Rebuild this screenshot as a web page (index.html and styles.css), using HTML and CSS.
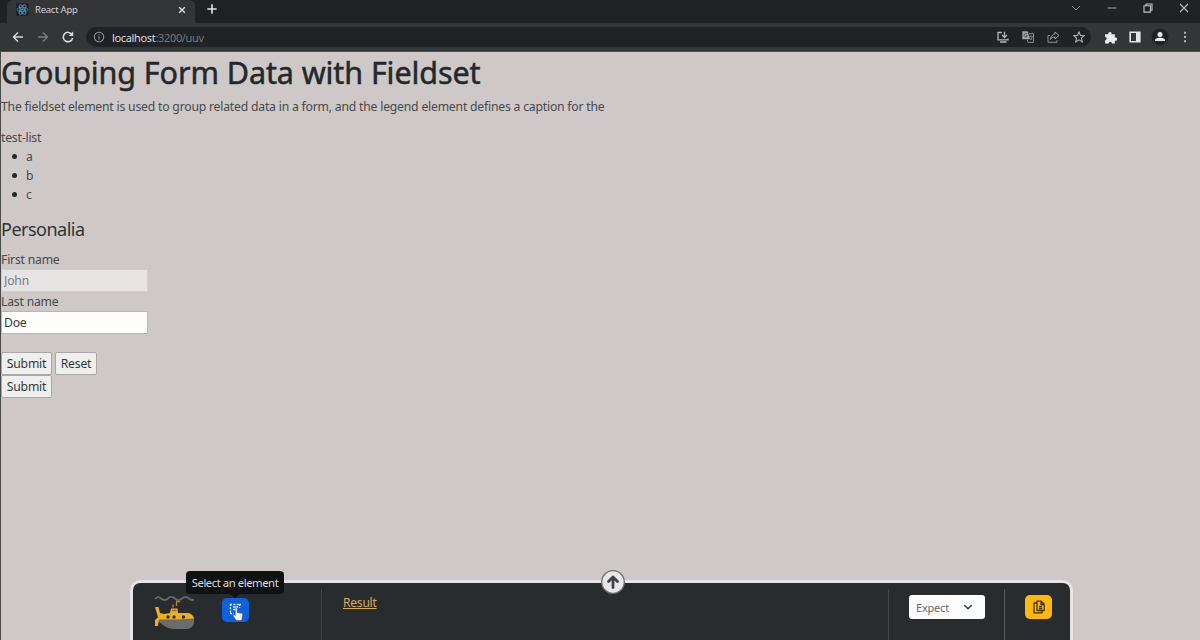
FILE: index.html
```html
<!DOCTYPE html>
<html lang="en">
<head>
<meta charset="utf-8">
<title>React App</title>
<link rel="stylesheet" href="styles.css">
</head>
<body>
<div class="window">
  <header class="tabbar">
    <div class="tab-edge"></div>
    <div class="tab">
      <svg class="favicon" width="13" height="13" viewBox="0 0 13 13"><rect width="13" height="13" rx="2" fill="#202327"/><g fill="none" stroke="#438bb7" stroke-width=".9"><ellipse cx="6.5" cy="6.5" rx="5.4" ry="2.1"/><ellipse cx="6.5" cy="6.5" rx="5.4" ry="2.1" transform="rotate(60 6.5 6.5)"/><ellipse cx="6.5" cy="6.5" rx="5.4" ry="2.1" transform="rotate(120 6.5 6.5)"/></g><circle cx="6.5" cy="6.5" r="1.2" fill="#438bb7"/></svg>
      <span class="tab-title">React App</span>
      <svg class="tab-close" width="8" height="8" viewBox="0 0 8 8"><path d="M1.2 1.2l5.6 5.6M6.8 1.2L1.2 6.8" stroke="#dedfe0" stroke-width="1.4"/></svg>
    </div>
    <svg class="new-tab" width="10" height="10" viewBox="0 0 10 10"><path d="M5 .3v9.4M.3 5h9.4" stroke="#e4e5e6" stroke-width="1.6"/></svg>
    <div class="window-controls">
      <svg width="10" height="10" viewBox="0 0 10 10"><path d="M1 3l4 4 4-4" fill="none" stroke="#8f9092"/></svg>
      <svg width="10" height="10" viewBox="0 0 10 10"><path d="M.7 5h8.6" stroke="#aaabac"/></svg>
      <svg width="10" height="10" viewBox="0 0 10 10"><path d="M1 2.7h6.4v6.4H1zM3 2.5V1h6v6.2H7.6" fill="none" stroke="#c2c3c4" stroke-width="1.1"/></svg>
      <svg width="10" height="10" viewBox="0 0 10 10"><path d="M1 1l8 8M9 1L1 9" stroke="#b9babb" stroke-width="1.1"/></svg>
    </div>
  </header>
  <nav class="toolbar">
    <svg class="nav-icon" width="12" height="12" viewBox="0 0 12 12"><path d="M6 1.5L1.5 6 6 10.5M1.5 6H11" fill="none" stroke="#d8d9da" stroke-width="1.4"/></svg>
    <svg class="nav-icon" width="12" height="12" viewBox="0 0 12 12"><path d="M6 1.5L10.5 6 6 10.5M10.5 6H1" fill="none" stroke="#7d7e80" stroke-width="1.3"/></svg>
    <svg class="nav-icon" width="12" height="12" viewBox="0 0 12 12"><path d="M10 3.6A4.7 4.7 0 1 0 10.6 7" fill="none" stroke="#dcdddd" stroke-width="1.5"/><path d="M11.2.6v4.5H6.7z" fill="#dcdddd"/></svg>
    <div class="address">
      <svg class="info" width="12" height="12" viewBox="0 0 12 12"><circle cx="6" cy="6" r="4.7" fill="none" stroke="#8e9092" stroke-width="1.1"/><path d="M6 5.3v3.2M6 3.2v1.2" stroke="#8e9092" stroke-width="1.1"/></svg>
      <span class="url"><b>localhost</b>:3200/uuv</span>
      <div class="address-icons">
        <svg width="12" height="12" viewBox="0 0 12 12"><path d="M5 1.500H1v7.300h10V7.500M3 11h6.500M7.500.8v5.500M5 4l2.500 2.500L10 4" fill="none" stroke="#b5b6b8" stroke-width="1.300"/></svg>
        <svg width="12" height="12" viewBox="0 0 12 12"><path d="M.3.3h5.4l2.2 8H.3z" fill="#a5a6a8"/><path d="M7 2.700h4.500v8.700H6l-.7-2.500" fill="none" stroke="#8a8b8d"/><path d="M7 5.400h3.800M9 4.400v1M10.200 5.500c-.6 2-1.300 2.600-2.200 3.600M7.900 6.700l2.200 2.200" stroke="#8a8b8d" fill="none" stroke-width=".8"/><path d="M5 3.200a1.700 1.700 0 1 0 .3 1.500H3.800" fill="none" stroke="#292b2e" stroke-width=".7"/></svg>
        <svg width="13" height="12" viewBox="0 0 13 12"><path d="M3 4.500H1v6.800h9V9" fill="none" stroke="#8b8d8f"/><path d="M8 1l4 3.500-4 3.500V6C5.700 6 4.400 6.800 3.500 8.500 3.800 5.500 5.300 3.500 8 3z" fill="none" stroke="#9c9ea0"/></svg>
        <svg width="12" height="12" viewBox="0 0 12 12"><path d="M6 .9l1.500 3.500 3.800.3-2.900 2.500.9 3.700L6 8.900l-3.300 2 .9-3.700L.7 4.700l3.800-.3z" fill="none" stroke="#b0b1b3" stroke-width="1.100"/></svg>
      </div>
    </div>
    <div class="browser-actions">
      <svg width="13" height="13" viewBox="0 0 12 12"><path d="M1 3h3a1.600 1.600 0 1 1 3 0h3v3a1.600 1.600 0 1 1 0 3v2.500H7.300a1.500 1.500 0 0 0-3 0H1V8.500a1.500 1.500 0 0 0 0-3z" fill="#ededed"/></svg>
      <svg width="12" height="12" viewBox="0 0 12 12"><path d="M1.200 1.200h9.600v9.600H1.200z" fill="none" stroke="#e5e5e5" stroke-width="1.600"/><path d="M7 1h4v10H7z" fill="#e5e5e5"/></svg>
      <svg width="18" height="18" viewBox="0 0 18 18"><circle cx="9" cy="9" r="8.500" fill="#202225"/><circle cx="9" cy="6.500" r="2.500" fill="#ededed"/><path d="M4 13v-.8C4 10.300 7.300 9.800 9 9.800s5 .5 5 2.400v.8z" fill="#ededed"/></svg>
      <svg width="4" height="12" viewBox="0 0 4 12"><path d="M1 .7h2v2H1zM1 5h2v2H1zM1 9.300h2v2H1z" fill="#b5b6b7"/></svg>
    </div>
  </nav>
  <main class="page">
    <h1>Grouping Form Data with Fieldset</h1>
    <p class="intro">The fieldset element is used to group related data in a form, and the legend element defines a caption for the</p>
    <div class="list-title">test-list</div>
    <ul class="list"><li>a</li><li>b</li><li>c</li></ul>
    <form class="form">
      <h2>Personalia</h2>
      <label for="first">First name</label>
      <input id="first" class="field" type="text" value="John" disabled>
      <label for="last">Last name</label>
      <input id="last" class="field" type="text" value="Doe">
      <div class="buttons"><button type="button">Submit</button><button class="reset" type="button">Reset</button></div>
      <button type="button">Submit</button>
    </form>
    <section class="assistant">
      <button class="expand" type="button" aria-label="Expand"><svg width="24" height="24" viewBox="0 0 24 24"><circle cx="12" cy="12" r="11.300" fill="#e9e7e7" stroke="#707172" stroke-width="1.300"/><path d="M12 17.500V7.500M7.500 11.500L12 7l4.500 4.500" fill="none" stroke="#3f4346" stroke-width="2.800" stroke-linecap="round" stroke-linejoin="round"/></svg></button>
      <div class="tools">
        <svg class="logo" width="42" height="36" viewBox="0 0 42 36"><path d="M1 4C3 1.500 5 1.500 7 3.500s5 2 7 0 5-2 7 0 5 2 7 0 5-2 7 0 4 1.500 5 1" fill="none" stroke="#66696a" stroke-width="1.800"/><path d="M4 22h36v5c0 4.500-4 7-8 7H20C12 34 7 28 3 25z" fill="#6b6c69"/><path d="M1 12h3.500l1.500 6 4 1 6-1 1-4.500h6.500L24 18h9c4 0 6.500 2.500 7 5.500L24 24.500 5 24.500 4 31H1v-6l3-2.500z" fill="#edae22"/><path d="M22.500 11V6.500H26M19 12.500V9.500" fill="none" stroke="#b38623" stroke-width="1.300"/><path d="M18 15.500h4.500" stroke="#8e6b25" stroke-width="1.300"/><circle cx="14" cy="22" r="1.700" fill="#35302a"/><circle cx="20" cy="22" r="1.700" fill="#35302a"/><circle cx="29.500" cy="22" r="1.700" fill="#35302a"/></svg>
        <div class="select-tool">
          <div class="tooltip">Select an element</div>
          <svg width="27" height="24" viewBox="0 0 27 24"><path d="M8 6.500h11M8 15.500h4M8.500 6v10M17.500 6v4" fill="none" stroke="#dce8fb" stroke-width="1.400" stroke-dasharray="2 1.300"/><path d="M11 9h5M11 11.500h3" stroke="#dce8fb" stroke-width="1.300"/><path d="M13.300 10.500c0-1.300 1.900-1.300 1.900 0v4l4.200.8c1 .2 1.400.8 1.300 1.800l-.6 3.200-.8 2.200h-4.800l-3.200-4.200c-.8-1 .3-2 1.200-1.300l.8.700z" fill="#f5f6f7" stroke="#3a4250" stroke-width=".4"/></svg>
        </div>
      </div>
      <div class="result"><span>Result</span></div>
      <div class="expect"><div class="dropdown"><span>Expect</span><svg width="10" height="8" viewBox="0 0 10 8"><path d="M1.200 2L5 5.800 8.800 2" fill="none" stroke="#3b3f42" stroke-width="1.500"/></svg></div></div>
      <div class="copy"><div class="copy-button"><svg width="14" height="14" viewBox="0 0 14 14"><path d="M5 1.200h4.200l3 3V10.500H5zM4.500 3H2v9.800h8V11M7 6.500h3M7 8.500h3M9 1.500v3h3" fill="none" stroke="#3d3311" stroke-width="1.300" stroke-linejoin="round"/></svg></div></div>
    </section>
  </main>
</div>
</body>
</html>
```
FILE: styles.css
```css
* { box-sizing: border-box; }
body { margin: 0; overflow: hidden; font-family: "Noto Sans", "Open Sans", sans-serif; }
svg { display: block; flex: none; }
.window { width: 1200px; height: 640px; display: flex; flex-direction: column; background: #cec8c8; }
.tabbar { height: 23px; flex: none; display: flex; background: #202124; }
.tab-edge { width: 7px; background: #202124; border-bottom-right-radius: 6px; }
.tab { width: 188px; display: flex; align-items: flex-start; padding: 3px 9px 0 9px; background: #343537; border-radius: 6px 6px 0 0; }
.tab-title { margin: 0 0 0 6px; font-size: 9.5px; line-height: 13px; letter-spacing: -.25px; color: #d0d1d2; }
.tab-close { margin: 3px 0 0 auto; }
.new-tab { margin: 4px 0 0 12px; }
.window-controls { margin: 3px 11px 0 auto; display: flex; gap: 26px; }
.toolbar { height: 29px; flex: none; display: flex; align-items: center; padding: 0 13px 0 12px; background: #343537; border-bottom: 1px solid #4c4b4c; }
.nav-icon { margin-right: 13px; }
.address { width: 1005px; height: 20px; margin-left: -1px; border-radius: 10px; display: flex; align-items: center; padding: 0 6px 0 7px; background: #202225; }
.url { margin-left: 7px; font-size: 11px; letter-spacing: -.34px; color: #77797b; }
.url b { font-weight: 400; color: #d9dadb; }
.address-icons { display: flex; gap: 13px; margin-left: auto; }
.browser-actions { display: flex; align-items: center; gap: 12px; margin-left: auto; }
.browser-actions svg:nth-child(3) { margin-left: -2px; }
.browser-actions svg:nth-child(4) { margin-left: 2px; }
.page { flex: 1; display: flex; flex-direction: column; border-left: 1px solid #4c4b4c; color: #484a4b; font-size: 12.2px; letter-spacing: -.2px; line-height: 19px; }
h1 { margin: 1px 0 0; height: 38px; font-size: 30.5px; line-height: 38px; letter-spacing: -.09px; font-weight: 400; -webkit-text-stroke: .5px #23282b; color: #23282b; white-space: nowrap; }
.intro { margin: 6px 0 0; line-height: 19px; white-space: nowrap; }
.list-title { margin-top: 12px; }
.list { margin: 0 0 0 11px; padding: 0; list-style: none; }
.list li { height: 19px; display: flex; align-items: center; gap: 9px; }
.list li::before { content: ""; width: 5px; height: 5px; border-radius: 50%; background: #24282b; }
.form { display: flex; flex-direction: column; align-items: flex-start; }
h2 { margin: 12px 0 9px; font-size: 18px; line-height: 27px; letter-spacing: -.5px; font-weight: 400; color: #303437; }
label { line-height: 15px; height: 17px; }
.field { width: 147px; height: 23px; margin-bottom: 2px; padding: 0 2px; border: 1px solid #b9b7b5; background: #fdfdfc; font: inherit; letter-spacing: inherit; color: #383a3b; }
.field:disabled { background: #e5e4e2; border-color: #d1cecb; color: #7c7c7b; }
.buttons { display: flex; gap: 3px; margin-top: 16px; }
.form button { width: 51px; height: 23px; padding: 0; border: 1px solid #a9a7a7; border-radius: 2px; background: #efefee; font: inherit; letter-spacing: inherit; color: #34383a; }
.form .reset { width: 42px; }
.assistant { position: relative; width: 943px; height: 60px; margin: auto 0 0 129px; display: flex; border: 3px solid #e9e5e5; border-bottom: 0; border-radius: 10px 10px 0 0; background: #282c2f; }
.expand { position: absolute; left: 468px; top: -13px; padding: 0; border: 0; background: none; }
.tools { width: 188px; display: flex; padding-top: 12px; }
.logo { margin-left: 21px; }
.select-tool { position: relative; width: 27px; height: 24px; margin: 3px 0 0 26px; border-radius: 5px; background: #0d62dc; }
.tooltip { position: absolute; left: -36px; top: -27px; width: 98px; height: 23px; border-radius: 4px; background: #101112; color: #d8d9d9; font-size: 11.3px; line-height: 23px; text-align: center; white-space: nowrap; letter-spacing: -.45px; }
.tooltip::after { content: ""; position: absolute; left: 44px; top: 23px; border: 5px solid transparent; border-top: 4px solid #101112; border-bottom: 0; }
.result { flex: 1; margin-top: 6px; border-left: 1px solid #424649; padding: 4px 0 0 21px; color: #d7aa55; font-size: 12px; text-decoration: underline; text-underline-offset: 1px; }
.expect { width: 116px; margin-top: 6px; padding: 6px 0 0 20px; border-left: 1px solid #424649; }
.dropdown { width: 76px; height: 24px; display: flex; align-items: center; justify-content: space-between; padding: 0 12px 0 7px; border-radius: 3px; background: #fdfdfd; color: #65686a; font-size: 11px; }
.copy { width: 66px; margin-top: 6px; padding: 6px 0 0 20px; border-left: 1px solid #56595b; }
.copy-button { width: 27px; height: 24px; display: flex; align-items: center; justify-content: center; border-radius: 5px; background: #ffb90d; }
```
